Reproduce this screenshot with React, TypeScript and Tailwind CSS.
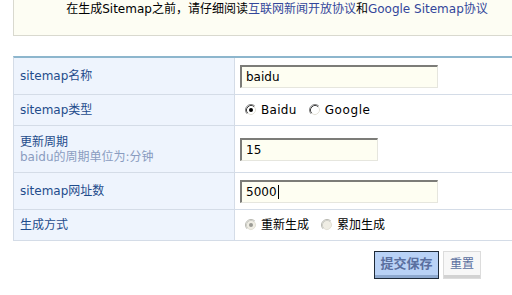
import React from "react";

const FONT = "font-['DejaVu_Sans','Noto_Sans_CJK_SC',sans-serif]";

function Radio({ checked, disabled }: { checked?: boolean; disabled?: boolean }) {
  const fill = disabled ? "#efede4" : "#ffffff";
  return (
    <svg width="12" height="12" viewBox="0 0 12 12" className="shrink-0">
      <circle cx="6" cy="6" r="5" fill={fill} />
      <path d="M2.11 9.89 A5.5 5.5 0 0 1 9.89 2.11" fill="none" stroke={disabled ? "#b8b8b0" : "#808080"} strokeWidth="1" />
      <path d="M9.89 2.11 A5.5 5.5 0 0 1 2.11 9.89" fill="none" stroke="#ffffff" strokeWidth="1" />
      <path d="M2.82 9.18 A4.5 4.5 0 0 1 9.18 2.82" fill="none" stroke={disabled ? "#cfcfc8" : "#404040"} strokeWidth="1" />
      <path d="M9.18 2.82 A4.5 4.5 0 0 1 2.82 9.18" fill="none" stroke="#e4e2d8" strokeWidth="1" />
      {checked && <circle cx="6" cy="6" r="2" fill={disabled ? "#9a9a94" : "#000000"} />}
    </svg>
  );
}

function Field({ value, width, caret }: { value: string; width: string; caret?: boolean }) {
  return (
    <div
      className={`${width} h-[23px] box-border bg-[#fefef2] border-t-2 border-l-2 border-[#7c7c78] border-r border-b border-r-[#e6e6de] border-b-[#e6e6de] px-[4px] flex items-center text-black`}
    >
      {value}
      {caret && <span className="inline-block w-px h-[14px] bg-black ml-px" />}
    </div>
  );
}

function Row({ h, label, children }: { h: string; label: React.ReactNode; children: React.ReactNode }) {
  return (
    <div className={`flex ${h}`}>
      <div className="w-[221px] shrink-0 bg-[#eef4fd] border-r border-b border-[#d4dce7] pl-[6px] flex items-center text-[#1f4c8c]">
        {label}
      </div>
      <div className="flex-1 border-b border-[#d4dce7] pl-[5px] flex items-center">{children}</div>
    </div>
  );
}

export default function App() {
  return (
    <div className={`w-[512px] h-[295px] overflow-hidden bg-white text-[12px] ${FONT}`}>
      <div className="ml-[13px] w-[527px] h-[36px] box-border bg-[#fdfdf3] border-l border-b border-[#d9d9cf] text-center pt-[2px] leading-[14px] text-black">
        在生成Sitemap之前，请仔细阅读
        <span className="text-[#33469a]">互联网新闻开放协议</span>和
        <span className="text-[#33469a]">Google Sitemap协议</span>
      </div>

      <div className="ml-[13px] mt-[20px] w-[527px] border-t-2 border-t-[#8db6cd] border-l border-l-[#d4dce7]">
        <Row h="h-[37px]" label="sitemap名称">
          <Field value="baidu" width="w-[198px]" />
        </Row>
        <Row h="h-[31px]" label="sitemap类型">
          <div className="flex items-center pl-[5px] text-black">
            <Radio checked />
            <span className="ml-[4px] tracking-[0.3px]">Baidu</span>
            <span className="ml-[12px]">
              <Radio />
            </span>
            <span className="ml-[4px] tracking-[0.6px]">Google</span>
          </div>
        </Row>
        <Row
          h="h-[47px]"
          label={
            <div className="flex flex-col leading-[15px] pt-[1px]">
              <span>更新周期</span>
              <span className="text-[#8a9cc0]">baidu的周期单位为:分钟</span>
            </div>
          }
        >
          <Field value="15" width="w-[138px]" />
        </Row>
        <Row h="h-[37px]" label="sitemap网址数">
          <Field value="5000" width="w-[198px]" caret />
        </Row>
        <Row h="h-[31px]" label="生成方式">
          <div className="flex items-center pl-[5px] text-black">
            <Radio checked disabled />
            <span className="ml-[4px]">重新生成</span>
            <span className="ml-[12px]">
              <Radio disabled />
            </span>
            <span className="ml-[4px]">累加生成</span>
          </div>
        </Row>
      </div>

      <div className="flex gap-[4px] pl-[374px] mt-[10px]">
        <button className="w-[65px] h-[28px] box-border border border-[#1e2a38] bg-[#b9d2f6] shadow-[inset_0_-3px_0_#8ea9cf] font-bold text-[13px] text-[#5a6f9f] pb-[2px]">
          提交保存
        </button>
        <button className="w-[38px] h-[28px] box-border border border-[#dcdcdc] bg-[#f7f7f7] shadow-[inset_0_-3px_0_#d2d2d2] text-[12px] text-[#5a6f9f] pb-[2px]">
          重置
        </button>
      </div>
    </div>
  );
}
